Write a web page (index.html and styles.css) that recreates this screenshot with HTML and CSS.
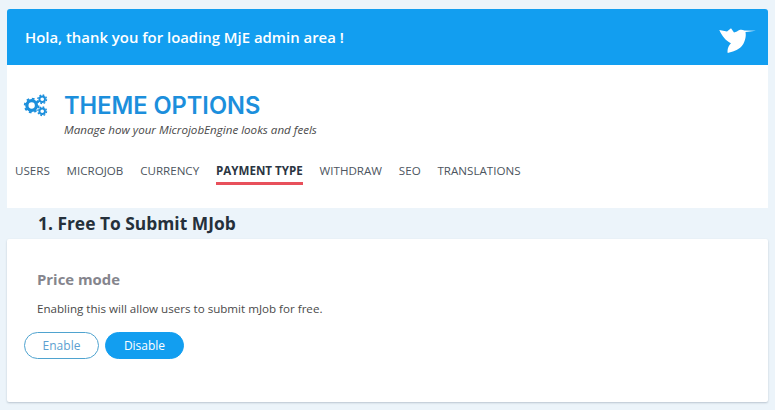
FILE: index.html
```html
<!DOCTYPE html>
<html lang="en">
<head>
<meta charset="utf-8">
<title>Theme Options</title>
<link rel="stylesheet" href="styles.css">
</head>
<body>
<div class="page">
  <header class="banner">
    <h1 class="banner-text">Hola, thank you for loading MjE admin area !</h1>
    <svg class="bird" viewBox="0 0 40 30" width="40" height="30" aria-hidden="true">
      <path d="M2.300 3 L10 4.500 L14 1.300 L17 5.500 L20 4.500 C22 2.500 25 2.500 27.500 3.500 L39 3.700 L28.500 5 C29.500 10 27.500 16.500 24 20 C21 23 15 25 10.700 26 C10 22 12 18 14 16.300 C9 14 5 9 2.300 3 Z" fill="#fff"/>
    </svg>
  </header>
  <section class="panel">
    <div class="title-row">
      <svg class="gears" viewBox="0 0 26 24" width="25" height="23" aria-hidden="true">
        <g fill="none" stroke="#1c8fdc">
          <circle cx="9" cy="12" r="5" stroke-width="3.400"/>
          <circle cx="9" cy="12" r="7.200" stroke-width="2" stroke-dasharray="2.800 2.850"/>
          <circle cx="20" cy="5.500" r="2.900" stroke-width="2"/>
          <circle cx="20" cy="5.500" r="4.500" stroke-width="1.400" stroke-dasharray="1.800 1.730"/>
          <circle cx="20" cy="18" r="2.900" stroke-width="2"/>
          <circle cx="20" cy="18" r="4.500" stroke-width="1.400" stroke-dasharray="1.800 1.730"/>
        </g>
      </svg>
      <div>
        <h2 class="title">THEME OPTIONS</h2>
        <p class="subtitle">Manage how your MicrojobEngine looks and feels</p>
      </div>
    </div>
    <nav class="tabs">
      <a class="tab">USERS</a>
      <a class="tab">MICROJOB</a>
      <a class="tab">CURRENCY</a>
      <a class="tab active">PAYMENT TYPE</a>
      <a class="tab">WITHDRAW</a>
      <a class="tab">SEO</a>
      <a class="tab">TRANSLATIONS</a>
    </nav>
  </section>
  <h3 class="section-title">1. Free To Submit MJob</h3>
  <section class="card">
    <h4 class="card-title">Price mode</h4>
    <p class="card-desc">Enabling this will allow users to submit mJob for free.</p>
    <div class="buttons">
      <button class="btn btn-outline">Enable</button>
      <button class="btn btn-solid">Disable</button>
    </div>
  </section>
</div>
</body>
</html>
```

FILE: styles.css
```css
* { box-sizing: border-box; }
html, body { margin: 0; height: 100%; }
body {
  background: #ecf4fa;
  font-family: "Open Sans", "Liberation Sans", sans-serif;
  overflow: hidden;
}
.page { padding: 9px 7px 0 7px; }
.banner {
  height: 56px;
  background: #129ef0;
  border-radius: 3px 3px 0 0;
  display: flex;
  align-items: center;
  justify-content: space-between;
  padding: 0 11px 0 18px;
}
.banner-text {
  margin: 0 0 1px;
  color: #fff;
  font-size: 14.900px;
  font-weight: 600;
}
.bird { margin-top: 10px; }
.panel {
  background: #fff;
  height: 143px;
  padding-top: 27px;
}
.title-row {
  display: flex;
  align-items: flex-start;
  padding-left: 16px;
  gap: 16px;
}
.gears { margin-top: 2px; }
.title {
  margin: 0;
  font-family: Inter, "Liberation Sans", sans-serif;
  font-size: 23.600px;
  font-weight: 600;
  line-height: 28px;
  color: #1c8fdc;
}
.subtitle {
  margin: 1px 0 0;
  font-size: 11.600px;
  line-height: 17px;
  font-style: italic;
  color: #4a4a4a;
}
.tabs {
  display: flex;
  gap: 16.800px;
  padding: 24px 0 0 8px;
}
.tab {
  font-size: 11.600px;
  line-height: 17px;
  color: #4d5560;
  padding-bottom: 3px;
  border-bottom: 3px solid transparent;
}
.tab.active {
  font-weight: 700;
  color: #2b3542;
  border-bottom-color: #e8505b;
}
.section-title {
  margin: 0;
  height: 31px;
  padding-left: 31px;
  font-size: 17.400px;
  line-height: 31px;
  font-weight: 700;
  color: #25303b;
}
.card {
  background: #fff;
  height: 163px;
  border-radius: 2px;
  box-shadow: 0 1px 2px rgba(70, 90, 110, .3);
  padding: 30px 17px 0;
}
.card-title {
  margin: 0 0 0 13px;
  font-size: 14.900px;
  line-height: 20px;
  font-weight: 700;
  color: #85858d;
}
.card-desc {
  margin: 11px 0 0 13px;
  font-size: 11.600px;
  line-height: 17px;
  color: #4a4a4a;
}
.buttons {
  display: flex;
  gap: 6px;
  margin-top: 15px;
}
.btn {
  height: 27px;
  border-radius: 14px;
  font-family: inherit;
  font-size: 12px;
  padding: 0;
  border: 1px solid #4fa3cf;
}
.btn-outline { width: 75px; background: #fff; color: #5c9fd0; }
.btn-solid { width: 79px; background: #129ef0; border-color: #129ef0; color: #fff; }
```
